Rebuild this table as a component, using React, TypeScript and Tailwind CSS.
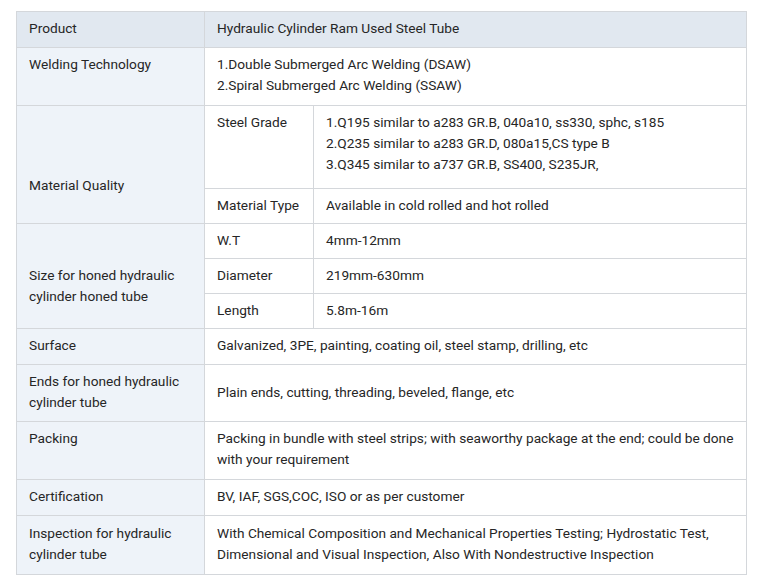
const cell = "border-r border-b border-[#d4d7db] px-3 text-[#262626] whitespace-nowrap";
const head = "bg-[#eef3f9]";
const mid = "flex items-center pb-[2px]";

function App() {
  return (
    <div className="min-h-[586px] bg-white pt-[11px] pl-4 font-['Roboto','Liberation_Sans',sans-serif] text-[13.7px] leading-[21px]">
      <div className="grid w-[731px] grid-cols-[188px_109px_1fr] grid-rows-[36px_58px_83px_35px_35px_35px_35px_36px_57px_58px_36px_59px] border-t border-l border-[#d4d7db]">
        <div className={`${cell} bg-[#e1e8f0] ${mid}`}>Product</div>
        <div className={`${cell} col-span-2 bg-[#e1e8f0] ${mid}`}>Hydraulic Cylinder Ram Used Steel Tube</div>

        <div className={`${cell} ${head} pt-[6px]`}>Welding Technology</div>
        <div className={`${cell} col-span-2 pt-[6px]`}>
          <div>1.Double Submerged Arc Welding (DSAW)</div>
          <div>2.Spiral Submerged Arc Welding (SSAW)</div>
        </div>

        <div className={`${cell} ${head} row-span-2 pt-[69px]`}>Material Quality</div>
        <div className={`${cell} pt-[6px]`}>Steel Grade</div>
        <div className={`${cell} pt-[6px]`}>
          <div>1.Q195 similar to a283 GR.B, 040a10, ss330, sphc, s185</div>
          <div>2.Q235 similar to a283 GR.D, 080a15,CS type B</div>
          <div>3.Q345 similar to a737 GR.B, SS400, S235JR,</div>
        </div>
        <div className={`${cell} ${mid}`}>Material Type</div>
        <div className={`${cell} ${mid}`}>Available in cold rolled and hot rolled</div>

        <div className={`${cell} ${head} row-span-3 pt-[41px]`}>
          <div>Size for honed hydraulic</div>
          <div>cylinder honed tube</div>
        </div>
        <div className={`${cell} ${mid}`}>W.T</div>
        <div className={`${cell} ${mid}`}>4mm-12mm</div>
        <div className={`${cell} ${mid}`}>Diameter</div>
        <div className={`${cell} ${mid}`}>219mm-630mm</div>
        <div className={`${cell} ${mid}`}>Length</div>
        <div className={`${cell} ${mid}`}>5.8m-16m</div>

        <div className={`${cell} ${head} ${mid}`}>Surface</div>
        <div className={`${cell} col-span-2 ${mid}`}>Galvanized, 3PE, painting, coating oil, steel stamp, drilling, etc</div>

        <div className={`${cell} ${head} flex flex-col justify-center pb-[2px]`}>
          <div>Ends for honed hydraulic</div>
          <div>cylinder tube</div>
        </div>
        <div className={`${cell} col-span-2 ${mid}`}>Plain ends, cutting, threading, beveled, flange, etc</div>

        <div className={`${cell} ${head} pt-[6px]`}>Packing</div>
        <div className={`${cell} col-span-2 pt-[6px]`}>
          <div>Packing in bundle with steel strips; with seaworthy package at the end; could be done</div>
          <div>with your requirement</div>
        </div>

        <div className={`${cell} ${head} ${mid}`}>Certification</div>
        <div className={`${cell} col-span-2 ${mid}`}>BV, IAF, SGS,COC, ISO or as per customer</div>

        <div className={`${cell} ${head} flex flex-col justify-center pb-[2px]`}>
          <div>Inspection for hydraulic</div>
          <div>cylinder tube</div>
        </div>
        <div className={`${cell} col-span-2 flex flex-col justify-center pb-[2px]`}>
          <div>With Chemical Composition and Mechanical Properties Testing; Hydrostatic Test,</div>
          <div>Dimensional and Visual Inspection, Also With Nondestructive Inspection</div>
        </div>
      </div>
    </div>
  );
}

export default App;
